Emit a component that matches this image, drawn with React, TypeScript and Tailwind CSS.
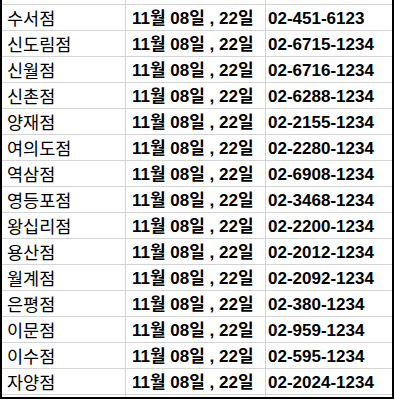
const ROWS: [string, string][] = [
  ['수서점', '02-451-6123'],
  ['신도림점', '02-6715-1234'],
  ['신월점', '02-6716-1234'],
  ['신촌점', '02-6288-1234'],
  ['양재점', '02-2155-1234'],
  ['여의도점', '02-2280-1234'],
  ['역삼점', '02-6908-1234'],
  ['영등포점', '02-3468-1234'],
  ['왕십리점', '02-2200-1234'],
  ['용산점', '02-2012-1234'],
  ['월계점', '02-2092-1234'],
  ['은평점', '02-380-1234'],
  ['이문점', '02-959-1234'],
  ['이수점', '02-595-1234'],
  ['자양점', '02-2024-1234'],
];

const font = { fontFamily: '"Liberation Sans", "Noto Sans CJK KR", sans-serif' };

function Row({ name, phone, h, top }: { name?: string; phone?: string; h: string; top?: boolean }) {
  return (
    <div className={`flex ${h} ${top ? '' : 'border-t border-[#d4d4d4]'}`}>
      <div className="w-[124px] border-r border-[#d4d4d4] flex items-end pl-[5px] text-[17.5px] leading-[22px] text-black">
        {name}
      </div>
      <div className="w-[140px] border-r border-[#d4d4d4] flex items-end pl-[6px] text-[17px] leading-[22px] font-bold text-black whitespace-nowrap">
        {name && '11월 08일 , 22일'}
      </div>
      <div className="flex-1 flex items-end pl-[2px] text-[17px] leading-[22px] font-bold text-black whitespace-nowrap">
        {phone}
      </div>
    </div>
  );
}

export default function App() {
  return (
    <div className="w-[395px] h-[400px] bg-white overflow-hidden" style={font}>
      <div className="w-[394px] h-[399px] border-x-2 border-b-2 border-black flex flex-col overflow-hidden">
        <Row h="h-[4px]" top />
        {ROWS.map(([name, phone]) => (
          <Row key={name} name={name} phone={phone} h="h-[26px]" />
        ))}
        <Row h="h-[3px]" />
      </div>
    </div>
  );
}
